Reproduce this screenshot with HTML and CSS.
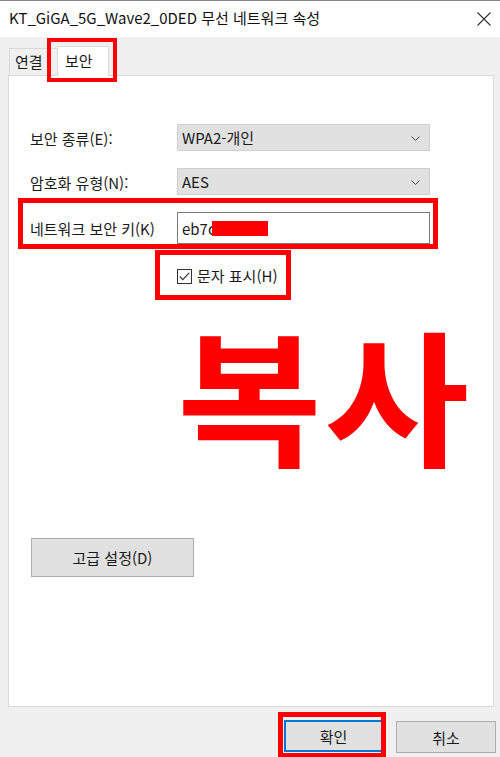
FILE: index.html
```html
<!DOCTYPE html>
<html lang="ko">
<head>
  <meta charset="UTF-8" />
  <title>KT_GiGA_5G_Wave2_0DED 무선 네트워크 속성</title>
  <link rel="stylesheet" href="styles.css">
</head>
<body>
  <div class="window">
    <header class="titlebar">
      <span class="title">KT_GiGA_5G_Wave2_0DED 무선 네트워크 속성</span>
      <svg class="close" width="14" height="14" viewBox="0 0 14 14"><path d="M0.5 0.5L13.5 13.5M13.5 0.5L0.5 13.5" stroke="#333" stroke-width="1.1" fill="none"/></svg>
    </header>

    <nav class="tabs">
      <span class="tab">연결</span>
      <span class="tab active">보안</span>
    </nav>

    <section class="panel">
      <div class="row">
        <label class="label">보안 종류(E):</label>
        <div class="combo">WPA2-개인
          <svg class="chev" width="9" height="5" viewBox="0 0 9 5"><path d="M0.5 0.5L4.5 4.5L8.5 0.5" stroke="#444" fill="none"/></svg>
        </div>
      </div>
      <div class="row">
        <label class="label">암호화 유형(N):</label>
        <div class="combo">AES
          <svg class="chev" width="9" height="5" viewBox="0 0 9 5"><path d="M0.5 0.5L4.5 4.5L8.5 0.5" stroke="#444" fill="none"/></svg>
        </div>
      </div>
      <div class="row">
        <label class="label">네트워크 보안 키(K)</label>
        <div class="textbox">eb7c<span class="dim">f</span><span class="redact"></span></div>
      </div>
      <div class="check-row">
        <span class="checkbox">
          <svg width="11" height="9" viewBox="0 0 11 9"><path d="M0.8 4.5L3.8 7.6L10.2 0.8" stroke="#333" stroke-width="1.2" fill="none"/></svg>
        </span>
        <span>문자 표시(H)</span>
      </div>

      <div class="stamp"><span>복사</span></div>

      <button class="btn advanced">고급 설정(D)</button>
    </section>

    <footer class="actions">
      <button class="btn ok">확인</button>
      <button class="btn">취소</button>
    </footer>

    <!-- red annotation boxes -->
    <div class="mark mark-tab"></div>
    <div class="mark mark-key"></div>
    <div class="mark mark-check"></div>
    <div class="mark mark-ok"></div>
  </div>
</body>
</html>
```

FILE: styles.css
```css
:root {
  --face: #f0f0f0;
  --btn: #e1e1e1;
  --btn-border: #adadad;
  --red: #ff0000;
  --text: #1a1a1a;
}
* { box-sizing: border-box; margin: 0; padding: 0; }
body {
  background: var(--face);
  color: var(--text);
  font-family: "Noto Sans CJK KR", "Noto Sans", sans-serif;
  font-size: 14px;
}
.window { position: relative; width: 500px; height: 757px; overflow: hidden; }

/* Title bar */
.titlebar {
  height: 37px;
  background: #fff;
  border-top: 1px solid #8a8a8a;
  display: flex;
  align-items: center;
  justify-content: space-between;
  padding: 0 9px 0 9px;
}
.title { font-size: 15px; line-height: 20px; color: #111; margin-top: -2px; }
.close { margin-top: -1px; }

/* Tabs */
.tabs { display: flex; align-items: flex-end; height: 38px; padding-left: 9px; }
.tab {
  height: 27px;
  padding: 0 5px;
  line-height: 25px;
  font-size: 15px;
  border: 1px solid #d9d9d9;
  border-bottom: none;
  background: var(--face);
  width: 50px;
}
.tab.active {
  height: 30px;
  width: 52px;
  margin-left: -2px;
  background: #fff;
  padding-left: 7px;
  line-height: 27px;
  margin-bottom: -1px;
  position: relative;
  z-index: 1;
}

/* Panel */
.panel {
  background: #fff;
  border: 1px solid #d9d9d9;
  margin: 0 6px 0 8px;
  height: 632px;
  padding: 48px 0 0 21px;
}
.row { display: flex; align-items: center; margin-bottom: 17px; }
.label { width: 147px; font-size: 15px; line-height: 20px; padding-top: 2px; }
.combo {
  width: 253px;
  height: 27px;
  background: var(--btn);
  border: 1px solid #cfcfcf;
  display: flex;
  align-items: center;
  justify-content: space-between;
  padding: 0 9px 0 4px;
  font-size: 15px;
}
.chev { margin-top: 1px; }
.textbox {
  width: 253px;
  height: 32px;
  border: 1px solid #7a7a7a;
  display: flex;
  align-items: center;
  padding-left: 4px;
  font-size: 15px;
  position: relative;
}
.dim { color: #888; }
.redact { position: absolute; left: 34px; top: 8px; width: 56px; height: 15px; background: var(--red); }

.check-row {
  display: flex;
  align-items: center;
  gap: 5px;
  margin: 22px 0 0 147px;
  font-size: 15px;
  line-height: 20px;
}
.checkbox {
  width: 15px; height: 15px;
  border: 1px solid #333;
  display: flex; align-items: center; justify-content: center;
}

.stamp {
  color: var(--red);
  font-weight: 700;
  font-size: 146px;
  line-height: 212px;
  height: 252px;
  padding-left: 147px;
}
.stamp span { display: inline-block; transform: scaleX(1.08); transform-origin: left; letter-spacing: 2px; }

.btn {
  background: var(--btn);
  border: 1px solid var(--btn-border);
  font-family: inherit;
  font-size: 15px;
  color: var(--text);
}
.advanced { width: 163px; height: 39px; margin-left: 1px; }

/* Bottom buttons */
.actions { display: flex; justify-content: flex-end; gap: 13px; padding: 14px 4px 0 0; }
.actions .btn { width: 100px; height: 32px; }
.actions .ok { width: 99px; border: 2px solid #0078d7; margin-top: -1px; }

/* Annotation boxes */
.mark { position: absolute; border: 5px solid var(--red); }
.mark-tab { left: 47px; top: 38px; width: 70px; height: 44px; border-width: 4px; }
.mark-key { left: 18px; top: 198px; width: 420px; height: 51px; }
.mark-check { left: 155px; top: 250px; width: 136px; height: 50px; }
.mark-ok { left: 278px; top: 712px; width: 108px; height: 46px; }
```
